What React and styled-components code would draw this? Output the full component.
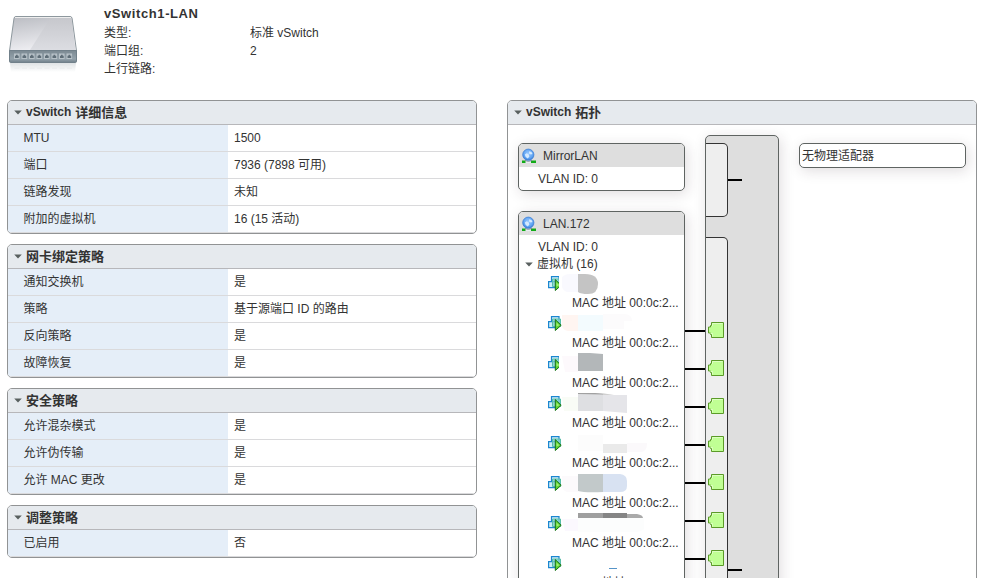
import React from 'react';
import styled, { createGlobalStyle } from 'styled-components';

const GlobalStyle = createGlobalStyle`
  * { box-sizing: border-box; }
  body {
    margin: 0;
    background: #fff;
    color: #333;
    font: 12px/18px "Liberation Sans", "Noto Sans CJK SC", sans-serif;
    overflow: hidden;
  }
  svg { display: block; flex: none; }
`;

const Page = styled.div`
  height: 578px;
  overflow: hidden;
  display: flex;
  flex-direction: column;
`;

const Summary = styled.header`
  flex: none;
  height: 100px;
  padding: 4px 0 0 8px;
  display: flex;
  gap: 26px;
`;

const SwitchArt = styled.svg`
  margin-top: 10px;
`;

const Title = styled.h1`
  margin: 0;
  font-size: 13px;
  line-height: 19px;
  letter-spacing: 0.6px;
`;

const Facts = styled.dl`
  margin: 0;
  padding-top: 1px;
  display: grid;
  grid-template-columns: 146px auto;
  grid-auto-rows: 18px;
  dt, dd { margin: 0; }
`;

const Columns = styled.main`
  flex: none;
  display: flex;
  gap: 30px;
  padding-left: 7px;
  width: 977px;
`;

const Stack = styled.div`
  width: 470px;
  display: flex;
  flex-direction: column;
  gap: 10px;
`;

const Panel = styled.section`
  width: 470px;
  height: ${(p) => (p.$tall ? '520px' : 'auto')};
  border: 1px solid #919394;
  border-radius: 5px;
  overflow: hidden;
  background: #fff;
`;

const PanelHead = styled.h2`
  margin: 0;
  height: 24px;
  padding: 0 0 0 6px;
  display: flex;
  align-items: center;
  gap: 4px;
  background: #e6eaee;
  border-bottom: 1px solid #b7b7ba;
  font-size: 13px;
  line-height: 23px;
`;

const HeadPrefix = styled.span`
  font-size: 12px;
`;

const Row = styled.div`
  height: 27px;
  display: grid;
  grid-template-columns: 220px 1fr;
  line-height: 26px;
  border-bottom: 1px solid #dadadc;
`;

const Label = styled.div`
  padding: 1px 0 0 15.5px;
  line-height: 25px;
  background: #e5eef8;
`;

const Value = styled.div`
  padding: 1px 0 0 6px;
  line-height: 25px;
`;

const Topology = styled.div`
  display: flex;
  padding: 10px 0 0 10px;
`;

const Groups = styled.div`
  width: 167px;
  padding-top: 8px;
  display: flex;
  flex-direction: column;
  gap: 20px;
`;

const Card = styled.div`
  height: ${(p) => p.$h}px;
  border: 1px solid #5f6462;
  border-radius: 5px;
  background: #fff;
  box-shadow: 2px 3px 14px rgba(50, 30, 40, 0.15);
  overflow: hidden;
`;

const CardHead = styled.div`
  height: 23px;
  padding: 1px 0 0 3px;
  display: flex;
  align-items: center;
  gap: 6px;
  line-height: 23px;
  background: #dedede;
  margin-bottom: 3px;
`;

const Vlan = styled.div`
  padding-left: 19px;
  height: 17px;
`;

const VmTitle = styled.div`
  padding-left: 6px;
  height: 18px;
  display: flex;
  align-items: center;
  gap: 4px;
`;

const Vm = styled.div`
  height: 40px;
  padding-left: 29px;
`;

const VmName = styled.div`
  height: 21px;
  display: flex;
`;

const VmMark = styled.span`
  width: ${(p) => (p.$clipped ? 11 : 14)}px;
  margin: 3px ${(p) => (p.$clipped ? 3 : 0)}px 0 0;
  height: 16px;
  overflow: hidden;
`;

const Mac = styled.div`
  padding-left: 24px;
  white-space: nowrap;
`;

const Wires = styled.div`
  width: 20px;
  padding-top: 195px;
  display: flex;
  flex-direction: column;
  gap: 36px;
`;

const Wire = styled.div`
  width: ${(p) => p.$w}px;
  height: 2px;
  flex: none;
  background: #000;
  margin-top: ${(p) => p.$top || 0}px;
`;

const Backplane = styled.div`
  width: 74px;
  height: 470px;
  border: 1px solid #5f6462;
  border-radius: 5px;
  background: #dedede;
  box-shadow: 2px 3px 14px rgba(50, 30, 40, 0.15);
  padding-top: 7px;
  display: flex;
  flex-direction: column;
  gap: 20px;
`;

const SlotRow = styled.div`
  display: flex;
`;

const Slot = styled.div`
  width: 22px;
  height: ${(p) => p.$h}px;
  background: #eee;
  border: 1px solid #333;
  border-left: 0;
  border-radius: 0 5px 5px 0;
  overflow: hidden;
`;

const PortList = styled.div`
  padding: 84px 0 0 2px;
  display: flex;
  flex-direction: column;
  gap: 22px;
`;

const Adapter = styled(Card)`
  width: 167px;
  margin: 8px 0 0 20px;
  padding-left: 2px;
  line-height: 25px;
`;

const Caret = () => (
  <svg width="8" height="5" viewBox="0 0 8 5">
    <path d="M.2.5h7.6L4 4.6z" fill="#59605f" />
  </svg>
);

const SwitchIcon = () => (
  <SwitchArt width="70" height="60" viewBox="0 0 70 60">
    <defs>
      <linearGradient id="lid" x1="0" y1="0" x2="0.3" y2="1">
        <stop offset="0" stopColor="#b9bbc1" />
        <stop offset="1" stopColor="#efeff3" />
      </linearGradient>
      <linearGradient id="shine" x1="0" y1="0" x2="0" y2="1">
        <stop offset="0" stopColor="#c6c7cc" />
        <stop offset="1" stopColor="#dcdde2" />
      </linearGradient>
      <linearGradient id="front" x1="0" y1="0" x2="0" y2="1">
        <stop offset="0" stopColor="#7b8992" />
        <stop offset="0.7" stopColor="#94a2ab" />
        <stop offset="1" stopColor="#70808a" />
      </linearGradient>
      <linearGradient id="mirror" x1="0" y1="0" x2="0" y2="1">
        <stop offset="0" stopColor="#dfe3e5" />
        <stop offset="1" stopColor="#fff" />
      </linearGradient>
    </defs>
    <path d="M2 49h66l-1 9H3z" fill="url(#mirror)" />
    {[0, 1, 2, 3, 4, 5, 6, 7].map((i) => (
      <path key={i} d={`M${6.5 + i * 7.5} 52h5v3h-5z`} fill="#edeff0" />
    ))}
    <path d="M8 2.500h54q1.700 0 2.100 1.800L68.500 37H1.500L6 4.300q.3-1.800 2-1.800z" fill="url(#lid)" stroke="#8e989e" />
    <path d="M43 3h19q1 0 1.400 1.500L67.500 36H22z" fill="url(#shine)" />
    <path d="M7 3.500h56" stroke="#eee" />
    <path d="M1.500 36.500h67v10.800q0 1.200-1.200 1.200H2.700q-1.200 0-1.200-1.200z" fill="url(#front)" stroke="#71808a" />
    {[0, 1, 2, 3, 4, 5, 6, 7].map((i) => (
      <g key={i}>
        <path d={`M${6 + i * 7.5} 39.500h5.600v5.500h-5.600z`} fill="#b8c2c8" />
        <path d={`M${7 + i * 7.5} 44v-2.300h1v-1h1.700v1h1V44z`} fill="#5f6e78" />
      </g>
    ))}
  </SwitchArt>
);

const NetworkIcon = () => (
  <svg width="15" height="16" viewBox="0 0 15 16">
    <defs>
      <radialGradient id="globe" cx="0.5" cy="0.4" r="0.6">
        <stop offset="0" stopColor="#9ccbff" />
        <stop offset="0.7" stopColor="#5ea3f2" />
        <stop offset="1" stopColor="#3b7cd3" />
      </radialGradient>
    </defs>
    <path d="M0 12.500h14v2.500H0z" fill="#12ab18" />
    <path d="M3.500 11.500h5.500v3.500H3.500z" fill="#e8edf1" />
    <path d="M3 12.500q3 1.500 7 0" stroke="#7c8790" fill="none" />
    <circle cx="6.300" cy="6.700" r="5.600" fill="url(#globe)" stroke="#3f80d6" strokeWidth=".8" />
    <path d="M2.800 6.500l1.800-1.200 2 1 .8 2.200-1.600 2L3.700 9zM7.200 3.300l2.300.6 1 2-1.700.7L7 5.500z" fill="#d3e9ff" />
  </svg>
);

const VmIcon = () => (
  <svg width="14" height="16" viewBox="0 0 14 16">
    <path d="M3.500.6h7.500v7h-7.500z" fill="#d8f1fb" stroke="#1b86cf" strokeWidth="1.200" />
    <path d="M.6 5.600h7.400v6H.6z" fill="#cdeefa" stroke="#1b86cf" strokeWidth="1.200" />
    <path d="M4.500 3h8v7.500h-8z" fill="#7bcfca" fillOpacity=".75" stroke="#58bda9" />
    <path d="M7.300 3.600v10.900l5.900-5.200z" fill="#5dd233" stroke="#17701a" strokeLinejoin="round" />
    <path d="M8.500 6.500v4l3-1.300z" fill="#a0ee72" />
  </svg>
);

const PortIcon = () => (
  <svg width="16" height="16" viewBox="0 0 16 16">
    <path d="M3.500.5h12v15h-12v-3H2.500v-1.500h-2v-6h2V3.500h1z" fill="#c0ff94" stroke="#5b9a28" />
    <path d="M4.500 14.500v-3h-2M4.500 4V1.500h10" fill="none" stroke="#dcffc1" />
  </svg>
);

// Smudges that cover the machine names; each entry is [path, colour].
const smudges = [
  [['M0 4q3-3 8-3h8v18H5q-5-2-5-6z', '#f9f9fe'], ['M16 1h7q13 0 13 10t-10 10q-7 0-10-2z', '#c4c4c4']],
  [['M0 2h16v16H6q-6-1-6-6z', '#fff5f1'], ['M16 2h25v16H16z', '#f3fbfe'], ['M41 1h21q8 0 8 7h-8v8H41z', '#fcfbfc']],
  [['M0 3h16v16H3z', '#fdf9fc'], ['M16 0h12l13 1v17H16z', '#b3b7b9']],
  [['M0 4h16v14H2z', '#f9fcf6'], ['M16 0h17l8 1v17H16z', '#dedfe2'], ['M41 2h24v18L41 18z', '#e5e5e9'], ['M16 0h17l19 1.500H41L16 1z', '#a1a1a1']],
  [['M16 2h25v16H16z', '#fcfcfc'], ['M41 11h24v9H41z', '#eaeaea'], ['M65 10h20q0 8-5 9H65z', '#fbf9fb']],
  [['M0 3h16v16H5q-5-2-5-6z', '#fcfafc'], ['M16 1h25v18q-18 1-25-1z', '#c2c9ca'], ['M41 1h17q7 1 7 7v5q0 6-7 6H41z', '#d8e2f2']],
  [['M0 6h16v12H3z', '#fbf8fe'], ['M16 5h66v11q-3 3-9 3H16z', '#fcfdfd'], ['M16 0h25v5H16z', '#9f9f9f'], ['M41 0h24v5H41z', '#858585'], ['M65 1h10q6 1 6 4H65z', '#aaa']],
  [['M47 15h8v1h-8z', '#5594c8']],
];

const NameSmudge = ({ shapes }) => (
  <svg width="90" height="21" viewBox="0 0 90 21">
    {shapes.map(([d, fill]) => (
      <path key={d} d={d} fill={fill} />
    ))}
  </svg>
);

const PanelTitle = ({ prefix, children }) => (
  <PanelHead>
    <Caret />
    {prefix && <HeadPrefix>{prefix}</HeadPrefix>}
    <span>{children}</span>
  </PanelHead>
);

const InfoPanel = ({ prefix, title, rows }) => (
  <Panel>
    <PanelTitle prefix={prefix}>{title}</PanelTitle>
    {rows.map(([label, value]) => (
      <Row key={label}>
        <Label>{label}</Label>
        <Value>{value}</Value>
      </Row>
    ))}
  </Panel>
);

const panels = [
  { prefix: 'vSwitch', title: '详细信息', rows: [['MTU', '1500'], ['端口', '7936 (7898 可用)'], ['链路发现', '未知'], ['附加的虚拟机', '16 (15 活动)']] },
  { title: '网卡绑定策略', rows: [['通知交换机', '是'], ['策略', '基于源端口 ID 的路由'], ['反向策略', '是'], ['故障恢复', '是']] },
  { title: '安全策略', rows: [['允许混杂模式', '是'], ['允许伪传输', '是'], ['允许 MAC 更改', '是']] },
  { title: '调整策略', rows: [['已启用', '否']] },
];

const ports = [0, 1, 2, 3, 4, 5, 6];

export default function App() {
  return (
    <Page>
      <GlobalStyle />
      <Summary>
        <SwitchIcon />
        <div>
          <Title>vSwitch1-LAN</Title>
          <Facts>
            <dt>类型:</dt><dd>标准 vSwitch</dd>
            <dt>端口组:</dt><dd>2</dd>
            <dt>上行链路:</dt><dd />
          </Facts>
        </div>
      </Summary>
      <Columns>
        <Stack>
          {panels.map((panel) => (
            <InfoPanel key={panel.title} {...panel} />
          ))}
        </Stack>
        <Panel $tall>
          <PanelTitle prefix="vSwitch">拓扑</PanelTitle>
          <Topology>
            <Groups>
              <Card $h={48}>
                <CardHead><NetworkIcon />MirrorLAN</CardHead>
                <Vlan>VLAN ID: 0</Vlan>
              </Card>
              <Card $h={400}>
                <CardHead><NetworkIcon />LAN.172</CardHead>
                <Vlan>VLAN ID: 0</Vlan>
                <VmTitle><Caret />虚拟机 (16)</VmTitle>
                {smudges.map((shapes, i) => (
                  <Vm key={i}>
                    <VmName>
                      <VmMark $clipped={i === 0 || i === 2}><VmIcon /></VmMark>
                      <NameSmudge shapes={shapes} />
                    </VmName>
                    <Mac>MAC 地址 00:0c:2...</Mac>
                  </Vm>
                ))}
              </Card>
            </Groups>
            <Wires>
              {ports.map((i) => <Wire key={i} $w={20} />)}
            </Wires>
            <Backplane>
              <SlotRow>
                <Slot $h={74} />
                <Wire $w={14} $top={36} />
              </SlotRow>
              <SlotRow>
                <Slot $h={380}>
                  <PortList>
                    {ports.map((i) => <PortIcon key={i} />)}
                  </PortList>
                </Slot>
                <Wire $w={14} $top={332} />
              </SlotRow>
            </Backplane>
            <Adapter $h={25}>无物理适配器</Adapter>
          </Topology>
        </Panel>
      </Columns>
    </Page>
  );
}
